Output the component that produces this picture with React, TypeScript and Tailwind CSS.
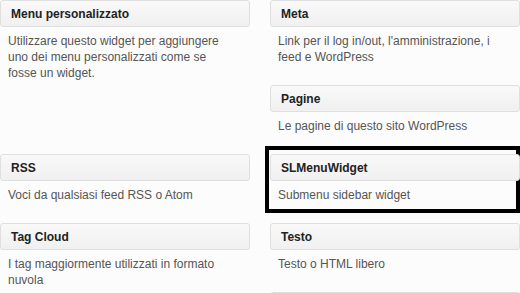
import React from "react";

type W = { title: string; desc: string; mb?: string };

function Card({ title, desc, mb }: W) {
  return (
    <div className={mb ?? "mb-[20px]"}>
      <div className="h-[27px] rounded-[3px] border border-[#dfdfdf] bg-gradient-to-b from-[#f9f9f9] to-[#f0f0f0] px-[10px] flex items-center">
        <span className="text-[12px] font-bold text-[#222]">{title}</span>
      </div>
      {desc && (
        <div className="pt-[6px] pl-[8px] pr-[22px] text-[12px] leading-[16px] text-[#555]">
          {desc}
        </div>
      )}
    </div>
  );
}

export default function App() {
  return (
    <div
      className="relative isolate h-[293px] w-[520px] overflow-hidden bg-[#fcfcfc]"
      style={{ fontFamily: '"Liberation Sans", Arial, sans-serif' }}
    >
      <div className="pointer-events-none absolute left-[265px] top-[146px] -z-10 h-[67px] w-[255px] border-4 border-black" />
      <div className="flex gap-[20px]">
        <div className="flex w-[250px] flex-col">
          <Card
            title="Menu personalizzato"
            desc="Utilizzare questo widget per aggiungere uno dei menu personalizzati come se fosse un widget."
            mb="mb-[73px]"
          />
          <Card title="RSS" desc="Voci da qualsiasi feed RSS o Atom" />
          <Card
            title="Tag Cloud"
            desc="I tag maggiormente utilizzati in formato nuvola"
          />
        </div>
        <div className="flex w-[250px] flex-col">
          <Card
            title="Meta"
            desc="Link per il log in/out, l'amministrazione, i feed e WordPress"
          />
          <Card title="Pagine" desc="Le pagine di questo sito WordPress" />
          <Card title="SLMenuWidget" desc="Submenu sidebar widget" />
          <Card title="Testo" desc="Testo o HTML libero" />
          <Card title="" desc="" />
        </div>
      </div>
    </div>
  );
}
